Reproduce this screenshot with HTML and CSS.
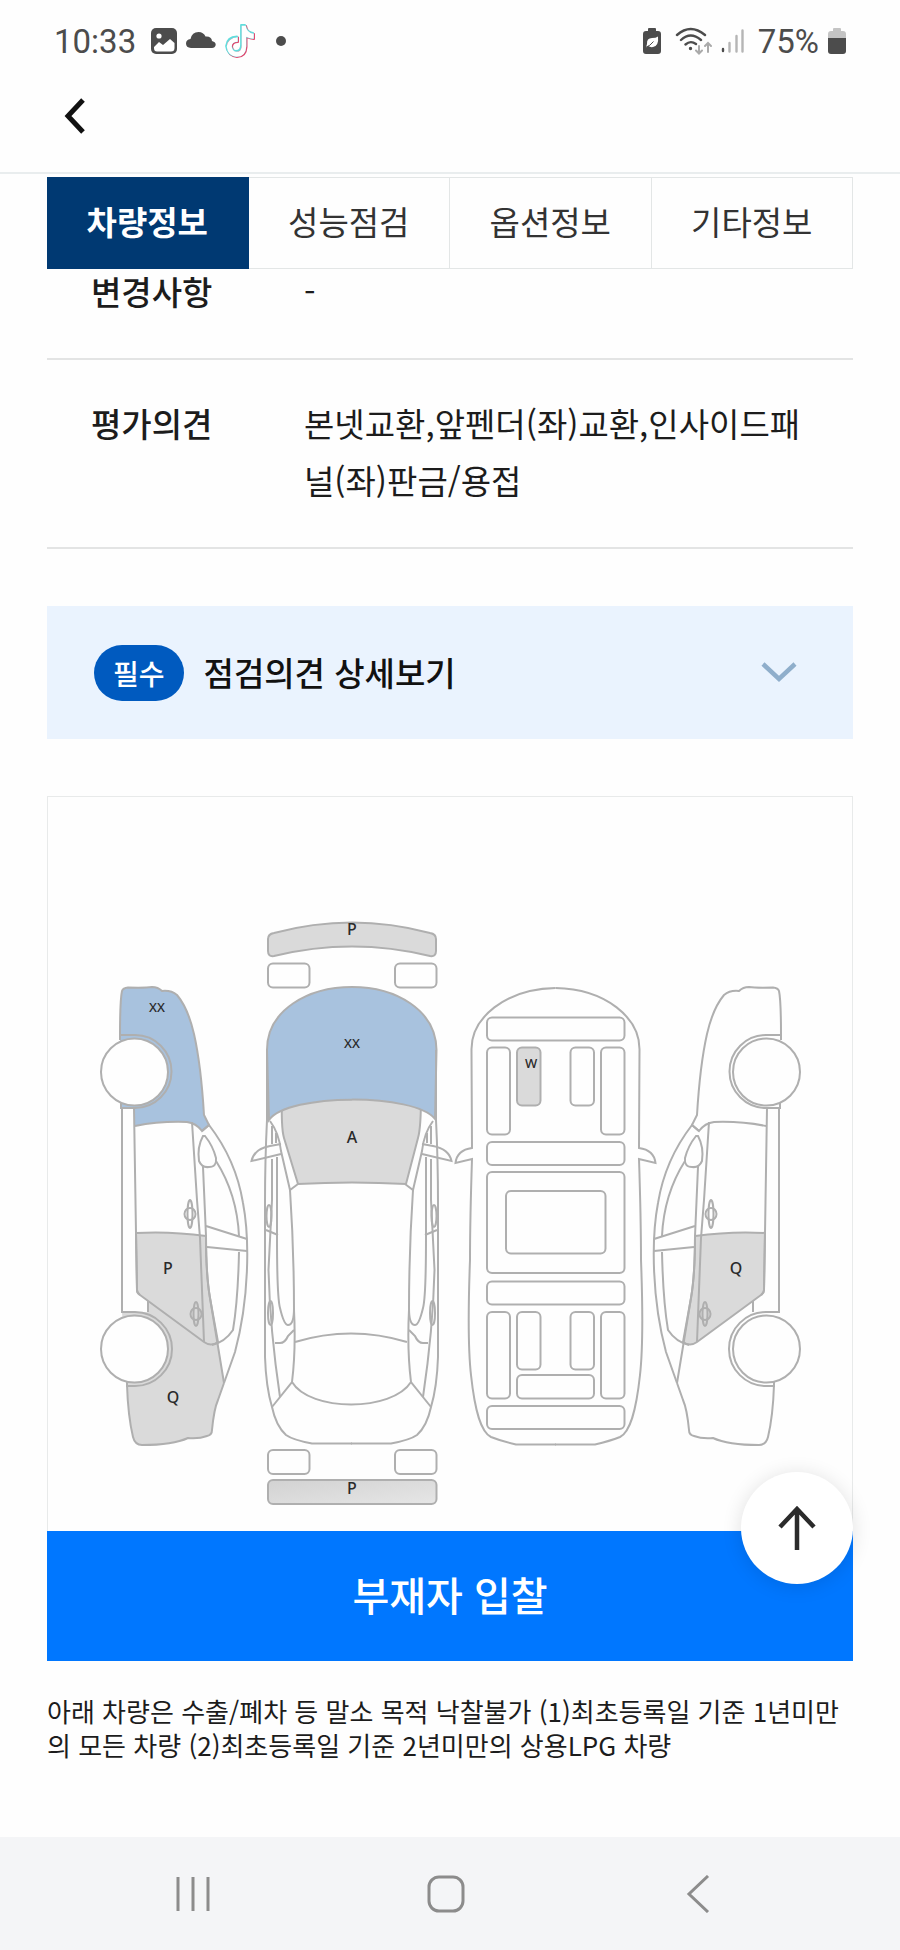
FILE: index.html
```html
<!DOCTYPE html>
<html lang="ko">

<head>
    <meta charset="UTF-8">
    <meta name="viewport" content="width=device-width, initial-scale=1">
    <title>차량정보</title>
    <link rel="stylesheet" href="styles.css">
</head>

<body>
    <div class="status">
        <span class="time">10:33</span>
        <svg width="26" height="26" viewBox="0 0 26 26">
            <rect width="26" height="26" rx="5" fill="#4c4c4c" />
            <circle cx="8" cy="8" r="2.6" fill="#fff" />
            <path d="M3 19 L8 14 L12 17 L19 11 L23.500 15 V20 Q23.500 23.500 20 23.500 H6 Q3 23.500 3 20 Z" fill="#fff" />
        </svg>
        <svg width="30" height="26" viewBox="0 0 30 26">
            <path d="M5 20 Q0 19.500 0 15.500 Q0 11.500 4.500 11 Q6 4 12.500 4 Q17.500 4 19.500 8.500 Q25.500 8 26 13 Q30 14 29.700 17 Q29 20 26 20 Z" fill="#4c4c4c" />
        </svg>
        <svg width="30" height="34" viewBox="0 0 30 34" fill="none" stroke-linejoin="round">
            <path d="M16 1 H20 Q21 8 28 9 V14 Q24 14 20.500 12 V22 Q20 32 11 32 Q2 31 1 22 Q2 13 12 12.500 V17 Q6 17 6 22 Q7 27 11 27 Q16 27 16 21 Z" stroke="#e0486f" stroke-width="2" transform="translate(1 1)" />
            <path d="M16 1 H20 Q21 8 28 9 V14 Q24 14 20.500 12 V22 Q20 32 11 32 Q2 31 1 22 Q2 13 12 12.500 V17 Q6 17 6 22 Q7 27 11 27 Q16 27 16 21 Z" stroke="#62dcdc" stroke-width="1.800" />
            <path d="M16 1 H20 Q21 8 28 9 V14 Q24 14 20.500 12 V22 Q20 32 11 32 Q2 31 1 22 Q2 13 12 12.500 V17 Q6 17 6 22 Q7 27 11 27 Q16 27 16 21 Z" fill="#fff" transform="translate(.7 .7)" />
        </svg>
        <span class="dot"></span>
        <svg class="push" width="23" height="26" viewBox="0 0 23 26">
            <path d="M3 3 H5 V1 Q5 0 6 0 H12 Q13 0 13 1 V3 H15 Q18 3 18 6 V23 Q18 26 15 26 H3 Q0 26 0 23 V6 Q0 3 3 3 Z" fill="#4c4c4c" />
            <path d="M4 16 Q3.500 10 9 10 Q13 10 15 8.500 Q16 18 10 19 Q7 19.500 5.500 18 L3 19.500" fill="#fff" />
            <path d="M2.500 19.500 Q7 18 10.500 13.500" fill="none" stroke="#4c4c4c" stroke-width="1" />
        </svg>
        <svg width="37" height="28" viewBox="0 0 37 28" fill="none" stroke="#4c4c4c" stroke-width="2.400" stroke-linecap="round">
            <path d="M2 8 Q15.500 -4 30 8 M6 13 Q15.500 4 26 13 M10.500 17.500 Q15.500 13 21 17" />
            <circle cx="15.500" cy="21.500" r="1" fill="#4c4c4c" stroke-width="1.400" />
            <path d="M24 19 V26 M21 23.500 L24 26.500 L27 23.500 M33 25 V16.500 M30 19 L33 16 L36 19" stroke="#aaa" stroke-width="2" />
        </svg>
        <svg width="28" height="26" viewBox="0 0 28 26" fill="none" stroke="#b5b5b5" stroke-width="2.400" stroke-linecap="round">
            <path d="M2 21 V23" stroke="#4c4c4c" />
            <path d="M8.500 15 V23.500 M15.500 8 V23.500 M21.500 2.500 V23.500" />
        </svg>
        <span class="percent">75%</span>
        <svg width="18" height="26" viewBox="0 0 18 26">
            <path d="M0 10 V6 Q0 3 3 3 H5 V1 Q5 0 6 0 H12 Q13 0 13 1 V3 H15 Q18 3 18 6 V10 Z" fill="#c4c4c4" />
            <path d="M0 10 H18 V23 Q18 26 15 26 H3 Q0 26 0 23 Z" fill="#4c4c4c" />
        </svg>
    </div>

    <header class="header">
        <button class="back" aria-label="뒤로">
            <svg width="22" height="36" viewBox="0 0 22 36">
                <path d="M19 2 L4 18 L19 34" fill="none" stroke="#111" stroke-width="5" />
            </svg>
        </button>
    </header>

    <main class="content">
        <nav class="tabs">
            <button class="tab active">차량정보</button>
            <button class="tab">성능점검</button>
            <button class="tab">옵션정보</button>
            <button class="tab">기타정보</button>
        </nav>

        <table class="info">
            <tr>
                <th>변경사항</th>
                <td>-</td>
            </tr>
            <tr>
                <th>평가의견</th>
                <td>본넷교환,앞펜더(좌)교환,인사이드패널(좌)판금/용접</td>
            </tr>
        </table>

        <button class="notice">
            <span class="badge">필수</span>
            <span class="notice-title">점검의견 상세보기</span>
            <svg width="36" height="22" viewBox="0 0 36 22">
                <path d="M2 2 L18 17 L34 2" fill="none" stroke="#8faecb" stroke-width="4.500" />
            </svg>
        </button>

        <div class="diagram">
            <svg viewBox="48 797 804 734">
                <defs>
                    <linearGradient id="bumper" x1="0" y1="0" x2="1" y2="1">
                        <stop offset="0" stop-color="#d2d2d2" />
                        <stop offset="1" stop-color="#e6e6e6" />
                    </linearGradient>

                    <!-- rear door panel -->
                    <path id="rear-door" d="M136 1233 Q170 1231 206 1236 Q206 1275 210 1298 L218 1342 Q211 1347 204 1342 L140 1295 Q137 1293 137 1290 Z" />

                    <!-- side view -->
                    <g id="side">
                        <path d="M120 1040 V1035 Q120 1000 122 991 Q123 988 128 987.500 Q145 988 152 987 Q158 987 162 991 Q171 990 177 995 Q188 1008 194 1034 Q201 1065 204 1115 L209 1125 L202 1131 Q196 1123 187 1122 Q160 1121 135 1126" />
                        <path d="M120 1035 H135 A36.500 36.500 0 0 1 135 1108 H121 V1103" />
                        <path d="M122 1108 V1312 H135 A37 37 0 0 1 135 1386 H127 V1381" />
                        <path d="M134 1108 L136 1233 L137 1290 Q137 1293 140 1295 M148 1301 V1312" />
                        <path d="M127 1385 Q128 1416 133 1437 Q135 1445 142 1445 Q173 1445 188 1438 Q199 1439 207 1436 Q212 1435 212 1430 Q214 1409 218 1400 L224 1383" />
                        <path d="M192 1122 L197 1200 L200 1238 L204 1342" />
                        <path d="M203 1167 Q205 1210 206 1236 Q206 1275 210 1298 L224 1383" />
                        <path d="M202 1131 L209 1125 Q236 1160 243 1203 C250 1240 249 1300 235 1352 L224 1383" />
                        <path d="M203 1136 Q197 1147 199 1161 Q202 1168 209 1167 Q217 1167 216 1158 Q213 1146 205 1136 Z" />
                        <path d="M216 1161 Q237 1194 239 1236 M206 1226 L247 1239 M207 1247 L247 1251 M239 1252 Q238 1300 233 1330 Q225 1342 212 1345" />
                        <ellipse cx="190" cy="1214" rx="5.500" ry="6" />
                        <ellipse cx="190" cy="1214" rx="2.500" ry="14" />
                        <ellipse cx="196" cy="1314" rx="5.500" ry="6" />
                        <ellipse cx="196" cy="1314" rx="2.500" ry="12" />
                        <circle class="white" cx="134.500" cy="1072" r="33.500" />
                        <circle class="white" cx="134.500" cy="1349" r="33.500" />
                    </g>

                    <!-- left half of the top view -->
                    <g id="top-half">
                        <path d="M267 1050 V1120 Q265 1160 265 1203 V1357 Q266 1387 272 1407 Q276 1426 286 1435 Q293 1440 312 1443.500 H352" />
                        <path d="M270 1121 Q279 1133 281 1151 L290 1190 L298 1184" />
                        <path d="M281 1144 L270 1146 Q254 1149 251.500 1161 L281 1154" />
                        <path d="M272 1126 V1144 M272 1159 V1200 L268.500 1270 Q270 1330 280 1397" />
                        <path d="M276 1133 V1143 M277 1157 V1237 Q277 1297 280 1308 Q284 1325 288 1325 Q294 1325 294 1308" />
                        <path d="M290 1190 Q294 1250 294 1310 Q296 1350 292 1382 L272 1407" />
                        <path d="M266 1230 L278 1235 M275 1343 H280 Q285 1343 288 1336 L294 1330" />
                        <ellipse cx="269" cy="1216" rx="2.500" ry="11" />
                        <ellipse cx="270.500" cy="1313" rx="2.500" ry="12" />
                    </g>

                    <!-- left half of the underbody -->
                    <path id="under-half" d="M555.500 988 C505 989 471 1018 471.500 1050 L472 1148 Q457 1150 455.500 1163 L472 1159 Q470 1220 470 1260 Q467 1340 471 1375 C475 1412 481 1432 491 1437 Q501 1441 516 1444.500 H556" />
                </defs>

                <!-- filled panels -->
                <path class="blue" d="M120 1108 V1035 Q120 1000 122 991 Q123 988 128 987.500 Q145 988 152 987 Q158 987 162 991 Q171 990 177 995 Q188 1008 194 1034 Q201 1065 204 1115 L209 1125 L202 1131 Q196 1123 187 1122 Q160 1121 135 1126 V1108 Z" />
                <path class="gray" d="M122 1312 H148 V1300 L204 1342 Q211 1347 218 1342 L224 1383 L218 1400 Q214 1409 212 1430 Q212 1435 207 1436 Q199 1439 188 1438 Q173 1445 142 1445 Q135 1445 133 1437 Q128 1416 127 1385 Z" />

                <g class="line">
                    <use href="#rear-door" class="gray" />
                    <use href="#side" />
                    <g transform="translate(901 0) scale(-1 1)">
                        <use href="#rear-door" class="gray" />
                        <use href="#side" />
                    </g>

                    <path class="gray" d="M274 933 Q352 912 430 933 Q436 934 436 939 V951 Q436 957 430 956 Q352 937 274 956 Q268 957 268 951 V939 Q268 934 274 933 Z" />
                    <rect x="268" y="963.500" width="41.500" height="24" rx="5" />
                    <rect x="395" y="963.500" width="41.500" height="24" rx="5" />
                    <path class="gray" d="M282 1095 Q281 1128 284 1138 L298 1184 Q352 1181 406 1184 L418 1138 Q421 1128 421 1095 Z" />
                    <path class="blue" d="M267 1050 C267 1010 308 987 352 987 S436 1010 436.500 1050 L435 1119 C415 1093 288 1093 269 1120 Z" />
                    <use href="#top-half" />
                    <use href="#top-half" transform="translate(703 0) scale(-1 1)" />
                    <path d="M295 1342 Q351 1325 407 1342 M292 1382 C310 1412 392 1412 411 1382" />
                    <rect x="268" y="1450" width="41.500" height="24" rx="5" />
                    <rect x="395" y="1450" width="41.500" height="24" rx="5" />
                    <rect x="268" y="1480" width="168.500" height="24" rx="5" fill="url(#bumper)" />

                    <use href="#under-half" />
                    <use href="#under-half" transform="translate(1111 0) scale(-1 1)" />
                    <rect x="487" y="1017.500" width="137.500" height="23" rx="5" />
                    <rect x="487" y="1047.500" width="23" height="87" rx="5" />
                    <rect class="gray" x="517" y="1047.500" width="23.500" height="58" rx="5" />
                    <rect x="570.500" y="1047.500" width="23.500" height="58" rx="5" />
                    <rect x="601" y="1047.500" width="23.500" height="87" rx="5" />
                    <rect x="487" y="1142" width="137.500" height="23" rx="5" />
                    <rect x="487" y="1172" width="137.500" height="101" rx="5" />
                    <rect x="506" y="1191" width="99.500" height="62.500" rx="5" />
                    <rect x="487" y="1281.500" width="137.500" height="23" rx="5" />
                    <rect x="487" y="1312" width="23" height="86.500" rx="5" />
                    <rect x="517" y="1312" width="23.500" height="57.500" rx="5" />
                    <rect x="570.500" y="1312" width="23.500" height="57.500" rx="5" />
                    <rect x="601" y="1312" width="23.500" height="86.500" rx="5" />
                    <rect x="517" y="1375" width="77" height="23.500" rx="5" />
                    <rect x="487" y="1406" width="137.500" height="23" rx="5" />
                </g>

                <g class="mark">
                    <text class="small" x="157" y="1012">XX</text>
                    <text x="168" y="1274">P</text>
                    <text x="173" y="1403">Q</text>
                    <text x="352" y="935">P</text>
                    <text class="small" x="352" y="1048">XX</text>
                    <text x="352" y="1143">A</text>
                    <text x="352" y="1494">P</text>
                    <text class="small" x="531" y="1068">W</text>
                    <text x="736" y="1274">Q</text>
                </g>
            </svg>
        </div>

        <div class="bid">
            <button class="bid-button">부재자 입찰</button>
            <button class="to-top" aria-label="맨 위로">
                <svg width="40" height="46" viewBox="0 0 40 46">
                    <path d="M20 45 V5 M3 22 L20 4 L37 22" fill="none" stroke="#2b2b2b" stroke-width="4.500" />
                </svg>
            </button>
        </div>

        <p class="note">아래 차량은 수출/폐차 등 말소 목적 낙찰불가 (1)최초등록일 기준 1년미만의 모든 차량 (2)최초등록일 기준 2년미만의 상용LPG 차량</p>
    </main>

    <nav class="softkeys">
        <button aria-label="최근 앱">
            <svg width="38" height="38" viewBox="0 0 38 38">
                <path d="M3 2 V36 M18 2 V36 M33 2 V36" fill="none" stroke="#8c8c8c" stroke-width="3" />
            </svg>
        </button>
        <button aria-label="홈">
            <svg width="38" height="38" viewBox="0 0 38 38">
                <rect x="2" y="2" width="34" height="34" rx="10" fill="none" stroke="#8c8c8c" stroke-width="3" />
            </svg>
        </button>
        <button aria-label="뒤로">
            <svg width="38" height="38" viewBox="0 0 38 38">
                <path d="M29 1 L10 19 L29 37" fill="none" stroke="#8c8c8c" stroke-width="3" />
            </svg>
        </button>
    </nav>
</body>

</html>
```
FILE: styles.css
```css
* {
    box-sizing: border-box;
}

body {
    margin: 0;
    min-height: 100vh;
    display: flex;
    flex-direction: column;
    font-family: "Noto Sans CJK KR", sans-serif;
    color: #1c1c1c;
    background-color: #fefefe;
}

button {
    padding: 0;
    border: none;
    background: none;
    font-family: inherit;
    color: inherit;
    cursor: pointer;
}

svg {
    display: block;
    flex: none;
}

.status {
    display: flex;
    align-items: center;
    gap: 9px;
    height: 82px;
    padding: 0 54px;
    font-family: Roboto, sans-serif;
    font-size: 33px;
    color: #4c4c4c;
}

.time {
    margin-right: 6px;
}

.dot {
    width: 10px;
    height: 10px;
    margin-left: 12px;
    border-radius: 50%;
    background-color: #4c4c4c;
}

.push {
    margin-left: auto;
}

.header {
    height: 92px;
    padding: 0 48px;
    border-bottom: 2px solid #e9edee;
}

.back {
    padding: 16px;
}

.content {
    padding: 3px 47px 0;
}

.tabs {
    display: flex;
    position: relative;
    background-color: #fefefe;
}

.tab {
    flex: 1;
    height: 92px;
    padding-bottom: 4px;
    border: 1px solid #e3e6e6;
    border-left: none;
    font-size: 33px;
    color: #333;
}

.tab.active {
    border-color: #003972;
    background-color: #003972;
    font-weight: bold;
    color: #fff;
}

.info {
    width: 100%;
    margin-top: -41px;
    border-collapse: collapse;
    font-size: 33px;
    line-height: 57px;
}

.info tr {
    border-bottom: 2px solid #e3e4e4;
}

.info th,
.info td {
    padding: 35px 0 38px;
    text-align: left;
    vertical-align: top;
}

.info th {
    width: 257px;
    padding-left: 44px;
    font-weight: 500;
}

.info td {
    padding-right: 36px;
}

.notice {
    display: flex;
    align-items: center;
    gap: 20px;
    width: 100%;
    margin-top: 57px;
    padding: 38px 56px 38px 47px;
    background-color: #eaf3fe;
    font-size: 33px;
    font-weight: 500;
    line-height: 57px;
    color: #111;
}

.badge {
    padding: 0 19px;
    border-radius: 28px;
    background-color: #005abf;
    font-size: 28px;
    line-height: 56px;
    color: #fff;
}

.notice-title {
    flex: 1;
    text-align: left;
}

.diagram {
    margin-top: 57px;
    border: 1px solid #e8eaea;
    border-bottom: none;
}

.diagram svg {
    width: 100%;
}

.line {
    fill: none;
    stroke: #afafaf;
    stroke-width: 2;
}

.white {
    fill: #fefefe;
}

.gray {
    fill: #dadada;
}

.blue {
    fill: #a8c2de;
}

.mark {
    font-family: "Noto Sans", sans-serif;
    font-size: 16px;
    font-weight: 500;
    text-anchor: middle;
    fill: #2a2a2a;
}

.small {
    font-size: 13px;
}

.bid {
    position: relative;
}

.bid-button {
    display: block;
    width: 100%;
    height: 130px;
    padding-bottom: 4px;
    background-color: #0077ff;
    font-size: 40px;
    font-weight: 500;
    color: #fff;
}

.to-top {
    position: absolute;
    top: -59px;
    right: 0;
    display: flex;
    align-items: center;
    justify-content: center;
    width: 112px;
    height: 112px;
    border-radius: 50%;
    background-color: #fff;
    box-shadow: 0 2px 20px rgba(0, 0, 0, 0.12);
}

.note {
    margin: 33px 0;
    font-size: 26px;
    line-height: 34px;
}

.softkeys {
    display: flex;
    align-items: center;
    justify-content: space-around;
    height: 113px;
    margin-top: auto;
    padding: 0 76px 0 68px;
    background-color: #f4f5f7;
}
```
